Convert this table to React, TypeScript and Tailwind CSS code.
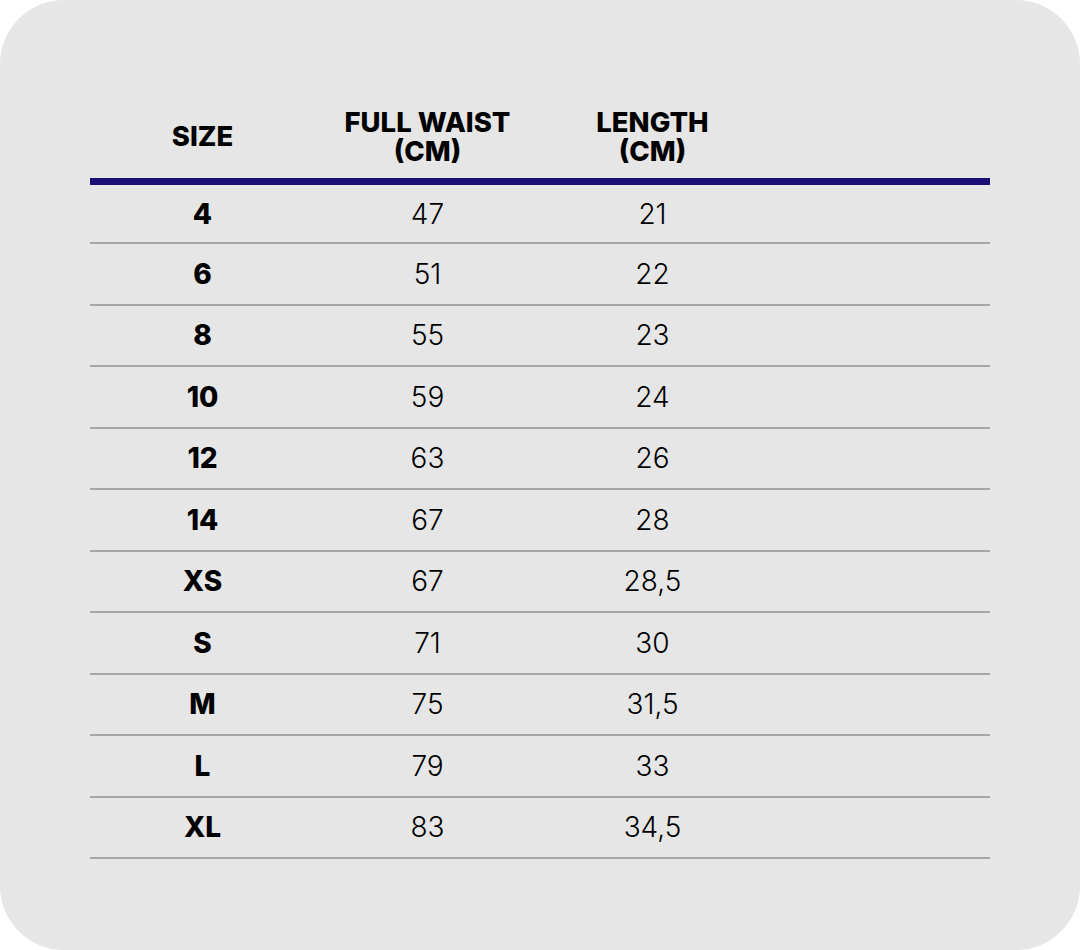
import React from 'react';

const rows: [string, string, string][] = [
  ['4', '47', '21'],
  ['6', '51', '22'],
  ['8', '55', '23'],
  ['10', '59', '24'],
  ['12', '63', '26'],
  ['14', '67', '28'],
  ['XS', '67', '28,5'],
  ['S', '71', '30'],
  ['M', '75', '31,5'],
  ['L', '79', '33'],
  ['XL', '83', '34,5'],
];

export default function App() {
  return (
    <div className="w-[1080px] h-[950px] bg-white">
      <div
        className="w-full h-full rounded-[64px] bg-[#e6e6e6] pt-[95px] px-[90px] text-black"
        style={{ fontFamily: 'Inter, "Open Sans", sans-serif' }}
      >
        <div className="grid grid-cols-4 h-[83px] items-center text-[27.5px] font-extrabold leading-[29px] text-center">
          <div>SIZE</div>
          <div>
            FULL WAIST
            <br />
            (CM)
          </div>
          <div>
            LENGTH
            <br />
            (CM)
          </div>
          <div />
        </div>
        <div className="h-[7px] bg-[#1c0e78]" />
        {rows.map(([size, waist, len], i) => (
          <div
            key={size}
            className={`grid grid-cols-4 items-center text-center text-[28px] border-b-2 border-[#a6a6a6] ${
              i === 0 ? 'h-[59px]' : 'h-[61.5px]'
            }`}
          >
            <div className="font-extrabold">{size}</div>
            <div className="font-light">{waist}</div>
            <div className="font-light">{len}</div>
            <div />
          </div>
        ))}
      </div>
    </div>
  );
}
